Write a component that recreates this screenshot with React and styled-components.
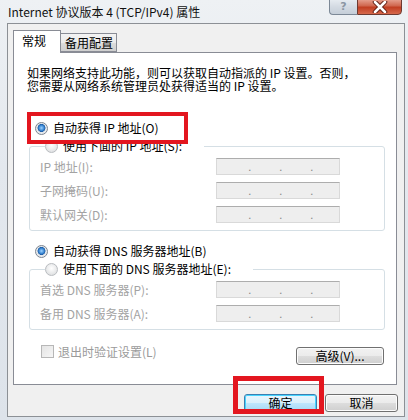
import React from 'react'
import styled, { createGlobalStyle } from 'styled-components'

const GlobalStyle = createGlobalStyle`
  html, body { margin: 0; padding: 0; background: #e6ebf0; }
  body { font-family: "Noto Sans CJK SC", "Noto Sans", sans-serif; }
`

const CJK = `"Noto Sans CJK SC", "Noto Sans", sans-serif`

function Radio({ checked, disabled, children, legend }) {
  return (
    <RadioRow as={legend ? 'legend' : 'div'} $legend={legend}>
      <RadioDot $checked={checked} />
      <RadioText $disabled={disabled}>{children}</RadioText>
    </RadioRow>
  )
}

function IpField() {
  return (
    <Field>
      <Dot>.</Dot>
      <Dot>.</Dot>
      <Dot>.</Dot>
    </Field>
  )
}

function App() {
  return (
    <Window>
      <GlobalStyle />
      <TitleBar>
        <Title>Internet 协议版本 4 (TCP/IPv4) 属性</Title>
        <Controls>
          <HelpBtn>?</HelpBtn>
          <CloseBtn>
            <svg width="16" height="12" viewBox="0 0 16 12">
              <path d="M3 1 L13 11 M13 1 L3 11" stroke="#5a1a10" strokeWidth="4.5" strokeLinecap="round" />
              <path d="M3 1 L13 11 M13 1 L3 11" stroke="#fff" strokeWidth="2.6" strokeLinecap="round" />
            </svg>
          </CloseBtn>
        </Controls>
      </TitleBar>

      <Client>
        <Tabs>
          <Tab $active>常规</Tab>
          <Tab>备用配置</Tab>
        </Tabs>

        <Panel>
          <Intro>
            <div>如果网络支持此功能，则可以获取自动指派的 IP 设置。否则，</div>
            <div>您需要从网络系统管理员处获得适当的 IP 设置。</div>
          </Intro>

          <Radio checked>自动获得 IP 地址(O)</Radio>
          <Group>
            <Radio legend>使用下面的 IP 地址(S):</Radio>
            <FieldRow><Label>IP 地址(I):</Label><IpField /></FieldRow>
            <FieldRow><Label>子网掩码(U):</Label><IpField /></FieldRow>
            <FieldRow><Label>默认网关(D):</Label><IpField /></FieldRow>
          </Group>

          <Spacer />
          <Radio checked>自动获得 DNS 服务器地址(B)</Radio>
          <Group>
            <Radio legend>使用下面的 DNS 服务器地址(E):</Radio>
            <FieldRow><Label>首选 DNS 服务器(P):</Label><IpField /></FieldRow>
            <FieldRow><Label>备用 DNS 服务器(A):</Label><IpField /></FieldRow>
          </Group>

          <BottomRow>
            <CheckLabel>
              <CheckBox />
              退出时验证设置(L)
            </CheckLabel>
            <Button $width={88}>高级(V)...</Button>
          </BottomRow>

          <Highlight $left={13} $top={59} $width={161} $height={32} $thick={4} />
        </Panel>

        <Footer>
          <Button $default>确定</Button>
          <Button>取消</Button>
        </Footer>

        <Highlight $left={225} $top={352} $width={91} $height={38} $thick={5} />
      </Client>
    </Window>
  )
}

export default App

const Window = styled.div`
width: 408px;
height: 420px;
display: flex;
flex-direction: column;
background: linear-gradient(180deg, #eef1f4 0%, #e3e8ee 40%, #dde3ea 100%);
overflow: hidden;
`

const TitleBar = styled.div`
height: 23px;
display: flex;
align-items: flex-start;
justify-content: space-between;
padding-left: 8px;
padding-right: 6px;
`

const Title = styled.div`
font-family: ${CJK};
font-size: 12px;
line-height: 24px;
color: #111;
`

const Controls = styled.div`
display: flex;
margin-top: -2px;
`

const HelpBtn = styled.div`
width: 27px;
height: 15px;
border: 1px solid #7c8896;
border-right: none;
border-radius: 0 0 0 4px;
background: linear-gradient(180deg, #e8edf2 0%, #d4dbe3 50%, #c5ced8 100%);
color: #8b96a3;
font-family: "DejaVu Sans", sans-serif;
font-size: 11px;
font-weight: bold;
line-height: 16px;
text-align: center;
`

const CloseBtn = styled.div`
width: 43px;
height: 15px;
border: 1px solid #6e3a31;
border-radius: 0 0 4px 0;
background: linear-gradient(180deg, #e8a595 0%, #d0674f 45%, #c13e22 55%, #d6694c 100%);
display: flex;
align-items: center;
justify-content: center;
`

const Client = styled.div`
position: relative;
box-sizing: border-box;
width: 398px;
height: 394px;
margin-left: 7px;
border: 1px solid #8c9095;
background: #f0f0f0;
padding: 6px 7px 0 5px;
display: flex;
flex-direction: column;
`

const Tabs = styled.div`
display: flex;
align-items: flex-end;
height: 22px;
`

const Tab = styled.div`
position: relative;
z-index: 1;
box-sizing: border-box;
height: ${p => (p.$active ? '23px' : '19px')};
margin-bottom: ${p => (p.$active ? '-1px' : '0')};
padding: ${p => (p.$active ? '2px 14px 0 8px' : '1px 3px 0 4px')};
border: 1px solid #898c95;
border-bottom: ${p => (p.$active ? 'none' : '1px solid #898c95')};
border-left: ${p => (p.$active ? '1px solid #898c95' : 'none')};
background: ${p => (p.$active ? '#fff' : 'linear-gradient(180deg, #f3f3f3 0%, #ebebeb 50%, #dddddd 51%, #cfcfcf 100%)')};
font-family: ${CJK};
font-size: 12px;
line-height: 16px;
color: #000;
`

const Panel = styled.div`
position: relative;
box-sizing: border-box;
width: 384px;
height: 333px;
border: 1px solid #898c95;
background: #fff;
padding-top: 13px;
display: flex;
flex-direction: column;
`

const Intro = styled.div`
padding-left: 13px;
font-family: ${CJK};
font-size: 12px;
line-height: 13px;
color: #000;
margin-bottom: 27px;
white-space: nowrap;
`

const RadioRow = styled.div`
display: flex;
align-items: center;
height: 18px;
padding: ${p => (p.$legend ? '0 22px 0 0' : '0 0 0 21px')};
margin-left: ${p => (p.$legend ? '5px' : '0')};
`

const RadioDot = styled.span`
box-sizing: border-box;
width: 13px;
height: 13px;
border-radius: 50%;
border: 1px solid ${p => (p.$checked ? '#7d8590' : '#b9bcc0')};
background: ${p => (p.$checked
    ? 'radial-gradient(circle at 50% 45%, #9fd3ff 0%, #3f8bd6 30%, #1d5ea8 45%, #e2e6ea 52%, #f7f8f9 100%)'
    : 'radial-gradient(circle at 50% 40%, #ffffff 0%, #e9eaeb 55%, #d6d8da 100%)')};
margin-right: 5px;
flex-shrink: 0;
`

const RadioText = styled.span`
font-family: ${CJK};
font-size: 12px;
line-height: 16px;
color: ${p => (p.$disabled ? '#9a9a9a' : '#000')};
white-space: nowrap;
`

const Group = styled.fieldset`
box-sizing: border-box;
width: 356px;
margin: 0 0 0 15px;
padding: 3px 0 7px 10px;
border: 1px solid #d5dfe5;
border-radius: 3px;
display: flex;
flex-direction: column;
gap: 7px;
min-inline-size: 0;
`

const FieldRow = styled.div`
display: grid;
grid-template-columns: 176px 124px;
align-items: center;
height: 17px;
`

const Label = styled.span`
font-family: ${CJK};
font-size: 12px;
line-height: 16px;
color: #a3a3a3;
white-space: nowrap;
`

const Field = styled.div`
box-sizing: border-box;
height: 17px;
border: 1px solid #d9d9d9;
border-top-color: #adadad;
background: #eeeeee;
display: flex;
align-items: flex-end;
gap: 29px;
padding-left: 31px;
`

const Dot = styled.span`
font-family: "DejaVu Sans", sans-serif;
font-size: 11px;
line-height: 12px;
color: #8a8a8a;
width: 2px;
`

const Spacer = styled.div`
height: 11px;
`

const BottomRow = styled.div`
display: flex;
justify-content: space-between;
align-items: flex-start;
width: 343px;
margin: 12px 0 0 27px;
`

const CheckLabel = styled.div`
display: flex;
align-items: center;
height: 18px;
gap: 4px;
font-family: ${CJK};
font-size: 12px;
color: #9a9a9a;
`

const CheckBox = styled.span`
box-sizing: border-box;
width: 13px;
height: 13px;
border: 1px solid #b7b7b7;
background: linear-gradient(135deg, #e4e4e4 0%, #f6f6f6 100%);
`

const Button = styled.div`
box-sizing: border-box;
width: ${p => p.$width || 73}px;
height: 18px;
margin-top: ${p => (p.$width ? '5px' : '0')};
border: 1px solid ${p => (p.$default ? '#3c7fb1' : '#707070')};
border-radius: 3px;
background: ${p => (p.$default
    ? 'linear-gradient(180deg, #eaf6fd 0%, #d9f0fc 50%, #bee6fd 51%, #a7d9f5 100%)'
    : 'linear-gradient(180deg, #f2f2f2 0%, #ebebeb 50%, #dddddd 51%, #cfcfcf 100%)')};
box-shadow: ${p => (p.$default ? 'inset 0 0 0 1px #48d4fe' : 'inset 0 0 0 1px #fcfcfc')};
font-family: ${CJK};
font-size: 12px;
line-height: 16px;
text-align: center;
color: #000;
`

const Footer = styled.div`
display: flex;
justify-content: flex-end;
gap: 8px;
padding-top: 9px;
margin-right: -1px;
`

const Highlight = styled.div`
position: absolute;
z-index: 2;
box-sizing: border-box;
left: ${p => p.$left}px;
top: ${p => p.$top}px;
width: ${p => p.$width}px;
height: ${p => p.$height}px;
border: ${p => p.$thick}px solid #e3161f;
pointer-events: none;
`
